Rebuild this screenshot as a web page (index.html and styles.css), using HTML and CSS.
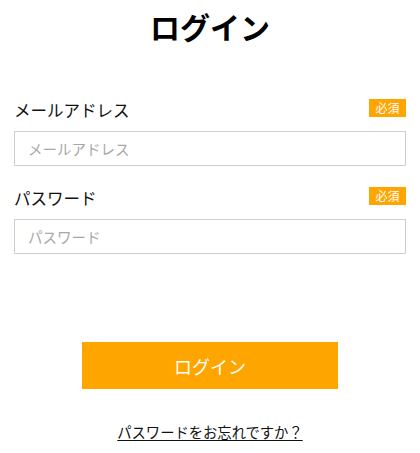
FILE: index.html
```html
<!DOCTYPE html>
<html lang="ja">
<head>
<meta charset="utf-8">
<title>ログイン</title>
<link rel="stylesheet" href="styles.css">
</head>
<body>
<main class="page">
  <h1 class="title">ログイン</h1>
  <form class="form">
    <div class="field">
      <div class="field-head">
        <label class="label" for="email">メールアドレス</label>
        <span class="badge">必須</span>
      </div>
      <input class="input" id="email" type="email" placeholder="メールアドレス">
    </div>
    <div class="field">
      <div class="field-head">
        <label class="label" for="password">パスワード</label>
        <span class="badge">必須</span>
      </div>
      <input class="input" id="password" type="password" placeholder="パスワード">
    </div>
    <div class="actions">
      <button class="button" type="button">ログイン</button>
    </div>
  </form>
  <div class="forgot">
    <a class="forgot-link" href="#">パスワードをお忘れですか？</a>
  </div>
</main>
</body>
</html>
```
FILE: styles.css
```css
* { box-sizing: border-box; }
html, body { margin: 0; padding: 0; background: #fff; }
body {
  font-family: "Noto Sans CJK JP", "Noto Sans", sans-serif;
  color: #111;
}
.page {
  padding: 0 14px;
}
.title {
  margin: 0;
  padding-top: 6px;
  font-size: 30px;
  line-height: 40px;
  font-weight: 700;
  text-align: center;
  color: #000;
}
.form {
  margin-top: 53px;
}
.field {
  display: flex;
  flex-direction: column;
}
.field + .field {
  margin-top: 21px;
}
.field-head {
  display: flex;
  justify-content: space-between;
  align-items: center;
  height: 22px;
  margin-bottom: 10px;
}
.label {
  font-size: 16.5px;
  line-height: 22px;
  color: #111;
}
.badge {
  display: inline-block;
  width: 37px;
  height: 18px;
  line-height: 18px;
  background: #ffa500;
  color: #fff;
  font-size: 12px;
  text-align: center;
  margin-top: -4px;
}
.input {
  width: 100%;
  height: 35px;
  border: 1px solid #cfcfcf;
  padding: 0 13px;
  font-family: inherit;
  font-size: 14.5px;
  color: #333;
  background: #fff;
  outline: none;
}
.input::placeholder {
  color: #a8a8a8;
}
.actions {
  display: flex;
  justify-content: center;
  margin-top: 88px;
}
.button {
  width: 256px;
  height: 47px;
  border: none;
  background: #ffa500;
  color: #fff;
  font-family: inherit;
  font-size: 18px;
  cursor: pointer;
}
.forgot {
  margin-top: 30px;
  text-align: center;
}
.forgot-link {
  font-size: 14.3px;
  color: #111;
  text-decoration: underline;
  text-underline-offset: 2px;
}
```
